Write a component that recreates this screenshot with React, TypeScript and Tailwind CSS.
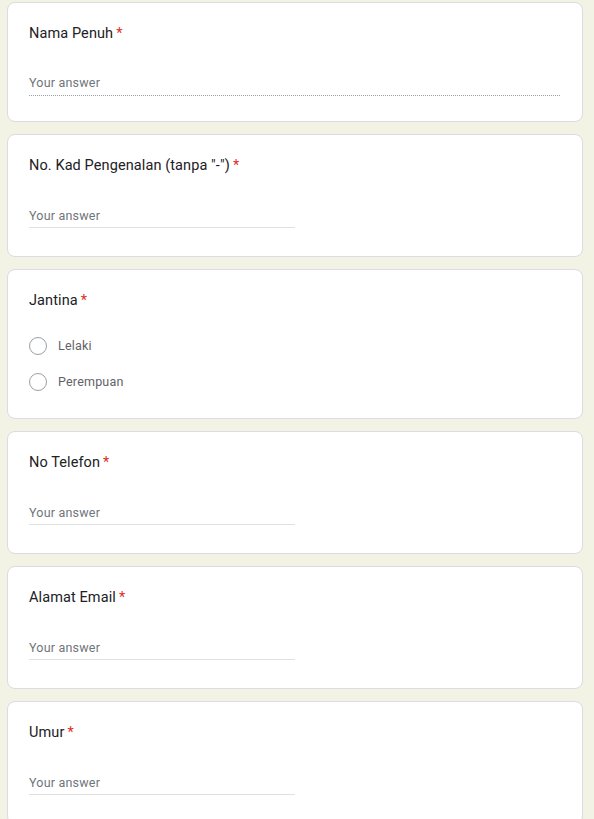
import React from "react";

type Question = {
  title: string;
  kind: "short" | "radio";
  options?: string[];
  dotted?: boolean;
};

const QUESTIONS: Question[] = [
  { title: "Nama Penuh", kind: "short", dotted: true },
  { title: 'No. Kad Pengenalan (tanpa "-")', kind: "short" },
  { title: "Jantina", kind: "radio", options: ["Lelaki", "Perempuan"] },
  { title: "No Telefon", kind: "short" },
  { title: "Alamat Email", kind: "short" },
  { title: "Umur", kind: "short" },
];

function Title({ text }: { text: string }) {
  return (
    <div className="text-[14.5px] leading-[20px] text-[#202124] tracking-[0.1px]">
      {text}
      <span className="text-[#d93025] ml-[3px]">*</span>
    </div>
  );
}

function ShortAnswer({ dotted }: { dotted?: boolean }) {
  return (
    <div
      className={
        dotted
          ? "mt-[30px] w-full pb-[3px] border-b border-dotted border-[#9aa0a6]"
          : "mt-[31px] w-[266px] pb-[2px] border-b border-[#e0e0e0]"
      }
    >
      <div className="text-[12.5px] leading-[18px] text-[#70757a] tracking-[0.2px]">Your answer</div>
    </div>
  );
}

function RadioGroup({ options }: { options: string[] }) {
  return (
    <div className="mt-[17px] flex flex-col">
      {options.map((o) => (
        <div key={o} className="h-[36px] flex items-center">
          <div className="w-[18px] h-[18px] rounded-full border-[1.5px] border-[#9aa0a6]" />
          <span className="ml-[11px] text-[12.5px] leading-[18px] text-[#5f6368] tracking-[0.2px]">{o}</span>
        </div>
      ))}
    </div>
  );
}

export default function App() {
  return (
    <div
      className="min-h-screen bg-[#f2f2e5] pt-[2px] pb-6"
      style={{ fontFamily: "Roboto, 'Noto Sans', Arial, sans-serif" }}
    >
      <div className="ml-[7px] w-[576px] flex flex-col gap-[12px]">
        {QUESTIONS.map((q) => (
          <div
            key={q.title}
            className={
              "bg-white border border-[#dadce0] rounded-[8px] pl-[21px] pr-[22px] pt-[21px] " +
              (q.kind === "radio" ? "pb-[18px]" : q.dotted ? "pb-[25px]" : "pb-[28px]")
            }
          >
            <Title text={q.title} />
            {q.kind === "short" ? <ShortAnswer dotted={q.dotted} /> : <RadioGroup options={q.options || []} />}
          </div>
        ))}
      </div>
    </div>
  );
}
